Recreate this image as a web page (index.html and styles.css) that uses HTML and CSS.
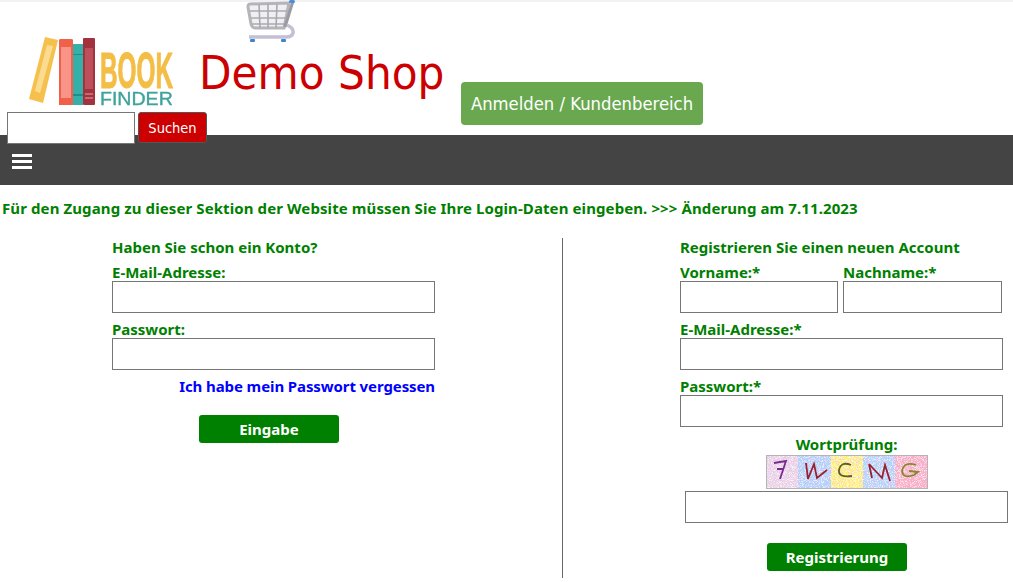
FILE: index.html
```html
<!DOCTYPE html>
<html lang="de">
<head>
<meta charset="utf-8">
<title>Demo Shop</title>
<link rel="stylesheet" href="styles.css">
</head>
<body>
<header class="site-header">
  <div class="brand-row">
    <svg class="logo" width="148" height="72" viewBox="0 0 148 72">
      <path d="M17 1 L30 4 L15 67 L1 63 Z" fill="#f6c04c"/>
      <path d="M19 9 L25 10 L12 57 L7 55 Z" fill="#f9dc92"/>
      <path d="M31 4 Q31 3 33 3 L43 3 Q45 3 45 4 L45 69 L31 69 Z" fill="#f0614a"/>
      <rect x="33" y="11" width="10" height="51" fill="#fb9488"/>
      <rect x="45" y="8" width="10" height="61" fill="#35b0a8"/>
      <rect x="45" y="18" width="10" height="1" fill="#1f8d88"/>
      <rect x="45" y="58" width="10" height="2" fill="#1f8d88"/>
      <rect x="55" y="2" width="12" height="67" rx="1" fill="#a2323e"/>
      <rect x="57" y="12" width="8" height="41" fill="#bd4f5a"/>
      <rect x="57" y="57" width="8" height="2" fill="#c96a72"/>
      <rect x="57" y="61" width="8" height="2" fill="#c96a72"/>
      <text class="logo-book" transform="translate(72 52) scale(0.487 1)">BOOK</text>
      <text class="logo-finder" transform="translate(72 69) scale(1.03 1)">FINDER</text>
    </svg>
    <div class="title-block">
      <svg class="cart" width="50" height="42" viewBox="0 0 50 42">
        <path d="M4 4 L43 3 L38 28 L9 28 Q6 28 5 24 L2 7 Q2 4 4 4 Z" fill="#f0f0f3" stroke="#b4b4ba" stroke-width="3"/>
        <path d="M4 11 L41 11 M5 18 L40 18 M6 24 L39 24 M13 4 L14 28 M22 4 L22 28 M31 4 L30 28" stroke="#a9a9b0" stroke-width="1.600" fill="none"/>
        <path d="M47 1 L39 27" stroke="#9a9aa2" stroke-width="3" fill="none"/>
        <path d="M41 25 Q48 28 47 33 Q46 37 40 37 L3 37" stroke="#c4bfd4" stroke-width="3.500" fill="none"/>
        <rect x="43" y="0" width="6" height="3" rx="1.500" fill="#4a8fd8"/>
        <rect x="4" y="39" width="5" height="3" rx="1" fill="#3f86d0"/>
        <rect x="35" y="39" width="5" height="3" rx="1" fill="#3f86d0"/>
      </svg>
      <h1 class="shop-title">Demo Shop</h1>
    </div>
    <a class="login-btn" href="#">Anmelden / Kundenbereich</a>
  </div>
  <form class="search">
    <input class="search-input" type="text">
    <button class="search-btn" type="button">Suchen</button>
  </form>
</header>
<nav class="nav-bar">
  <div class="burger"><span></span><span></span><span></span></div>
</nav>
<main>
  <p class="notice">Für den Zugang zu dieser Sektion der Website müssen Sie Ihre Login-Daten eingeben. &gt;&gt;&gt; Änderung am 7.11.2023</p>
  <div class="columns">
    <section class="col col-left">
      <form class="form form-login">
        <h2 class="heading">Haben Sie schon ein Konto?</h2>
        <label class="label">E-Mail-Adresse:</label>
        <input class="field" type="text">
        <label class="label label-next">Passwort:</label>
        <input class="field" type="password">
        <a class="forgot" href="#">Ich habe mein Passwort vergessen</a>
        <button class="submit submit-login" type="button">Eingabe</button>
      </form>
    </section>
    <section class="col col-right">
      <form class="form form-register">
        <h2 class="heading">Registrieren Sie einen neuen Account</h2>
        <div class="name-row">
          <div class="name-first">
            <label class="label">Vorname:*</label>
            <input class="field" type="text">
          </div>
          <div class="name-last">
            <label class="label">Nachname:*</label>
            <input class="field" type="text">
          </div>
        </div>
        <label class="label label-next">E-Mail-Adresse:*</label>
        <input class="field" type="text">
        <label class="label label-next">Passwort:*</label>
        <input class="field" type="password">
        <div class="captcha-label">Wortprüfung:</div>
        <svg class="captcha" width="162" height="34" viewBox="0 0 162 34">
          <defs>
            <filter id="noise-pink" x="0" y="0" width="100%" height="100%">
              <feTurbulence type="fractalNoise" baseFrequency="1.100" numOctaves="2" seed="4"/>
              <feColorMatrix type="matrix" values="0 0 0 0 1  0 0 0 0 0.45  0 0 0 0 0.9  7 0 0 0 -3.4"/>
            </filter>
            <filter id="noise-white" x="0" y="0" width="100%" height="100%">
              <feTurbulence type="fractalNoise" baseFrequency="1.100" numOctaves="2" seed="11"/>
              <feColorMatrix type="matrix" values="0 0 0 0 1  0 0 0 0 1  0 0 0 0 1  7 0 0 0 -3.4"/>
            </filter>
          </defs>
          <rect x="0" width="32" height="34" fill="#e4d9e4"/>
          <rect x="32" width="33" height="34" fill="#a9d6fb"/>
          <rect x="65" width="32" height="34" fill="#fdf873"/>
          <rect x="97" width="32" height="34" fill="#acd8fb"/>
          <rect x="129" width="33" height="34" fill="#f8b0c0"/>
          <rect x="0" width="162" height="34" filter="url(#noise-white)" opacity="0.7"/>
          <rect x="0" width="162" height="34" filter="url(#noise-pink)" opacity="0.5"/>
          <path class="stroke-purple" d="M8 8 L20 6 L14 24 M11 14 L18 14"/>
          <path class="stroke-red" d="M40 8 L42 24 L48 9 L51 23 L61 15"/>
          <path class="stroke-olive" d="M85 10 Q75 6 73 15 Q72 23 86 21"/>
          <path class="stroke-red" d="M103 9 L106 23 M103 9 L116 23 L119 10 L124 26"/>
          <path class="stroke-olive2" d="M150 10 Q138 6 136 16 Q137 24 148 20 L152 17 L143 16"/>
          <rect x="0.500" y="0.500" width="161" height="33" fill="none" stroke="#b5b5b5"/>
        </svg>
        <input class="field field-captcha" type="text">
        <button class="submit submit-register" type="button">Registrierung</button>
      </form>
    </section>
  </div>
</main>
</body>
</html>
```
FILE: styles.css
```css
* { box-sizing: border-box; }
html, body { margin: 0; padding: 0; }
body {
  width: 1013px;
  height: 582px;
  overflow: hidden;
  background: #fff;
  font-family: "Noto Sans", "Liberation Sans", sans-serif;
}
.site-header { border-top: 2px solid #f1f1f1; height: 135px; }
.brand-row { display: flex; align-items: flex-start; height: 110px; }
.logo { margin: 34px 0 0 28px; flex: none; filter: blur(0.3px); }
.logo-book { font: 700 50px "Liberation Sans", sans-serif; fill: #f4bd45; stroke: #f4bd45; stroke-width: 1px; }
.logo-finder { font: 400 19px "Liberation Sans", sans-serif; fill: #3fa39c; stroke: #3fa39c; stroke-width: 0.4px; }
.title-block { margin-left: 23px; width: 262px; flex: none; }
.cart { display: block; margin: -2px 0 0 47px; position: relative; z-index: 1; filter: blur(0.3px); }
.shop-title {
  margin: 0; font-family: "DejaVu Sans Condensed", "DejaVu Sans", sans-serif; font-stretch: condensed;
  font-size: 47px; font-weight: 400; line-height: 62px; color: #cc0000;
}
.login-btn {
  flex: none; margin-top: 80px; width: 242px; height: 43px;
  background: #6aa84f; border-radius: 4px; color: #fff; text-decoration: none;
  font-family: "DejaVu Sans Condensed", "DejaVu Sans", sans-serif; font-stretch: condensed;
  font-size: 18.300px; line-height: 43px; text-align: center; position: relative; z-index: 1;
}
.search { display: flex; align-items: flex-start; gap: 3px; margin-left: 7px; position: relative; z-index: 1; }
.search-input { width: 128px; height: 32px; border: 1px solid #767676; background: #fff; padding: 0; }
.search-btn {
  width: 69px; height: 31px; padding: 1px 0 0; background: #cc0000; color: #fff;
  border: 1px solid #555; border-radius: 3px;
  font-family: "DejaVu Sans Condensed", "DejaVu Sans", sans-serif; font-stretch: condensed; font-size: 14.500px;
}
.nav-bar { height: 50px; background: #444; padding: 19px 0 0 12px; }
.burger { display: flex; flex-direction: column; gap: 3px; width: 20px; }
.burger span { display: block; height: 3px; background: #fff; }
main { display: block; }
.notice { margin: 0; height: 53px; padding: 13px 0 0 2px; font-size: 15px; font-weight: 700; line-height: 20px; letter-spacing: 0.100px; color: #008000; }
.columns { display: flex; height: 340px; }
.col-left { width: 563px; flex: none; border-right: 1px solid #666; padding-left: 112px; }
.col-right { flex: 1; padding-left: 117px; }
.form { position: relative; display: flex; flex-direction: column; align-items: flex-start; }
.form-login { width: 323px; }
.form-register { width: 323px; }
.heading { margin: 0; font-size: 15px; font-weight: 700; line-height: 18px; color: #008000; }
.label { display: block; margin-top: 7px; font-size: 15px; font-weight: 700; line-height: 18px; color: #008000; }
.label-next { margin-top: 7px; }
.field { display: block; width: 323px; height: 32px; border: 1px solid #767676; background: #fff; padding: 0; }
.forgot { align-self: flex-end; margin-top: 6px; font-size: 15px; font-weight: 700; line-height: 20px; letter-spacing: -0.100px; color: #0000ff; text-decoration: none; }
.submit {
  display: block; width: 140px; height: 28px; padding: 0; background: #008000; color: #fff; border: 0;
  border-radius: 3px; font: 700 15px "Noto Sans", sans-serif;
}
.submit-login { margin: 19px 0 0 87px; }
.name-row { display: flex; gap: 5px; }
.name-first .field { width: 158px; }
.name-last .field { width: 159px; }
.captcha-label { align-self: center; margin-top: 7px; font-size: 15px; font-weight: 700; line-height: 20px; color: #008000; transform: translateX(5px); }
.captcha { display: block; margin: 1px 0 2px 86px; }
.field-captcha { margin-left: 5px; }
.submit-register { margin: 20px 0 0 87px; }
.stroke-purple, .stroke-red, .stroke-olive, .stroke-olive2 { fill: none; stroke-width: 1.800; }
.stroke-purple { stroke: #7a2a90; }
.stroke-red { stroke: #98222e; }
.stroke-olive { stroke: #59602a; }
.stroke-olive2 { stroke: #85892a; }
```
